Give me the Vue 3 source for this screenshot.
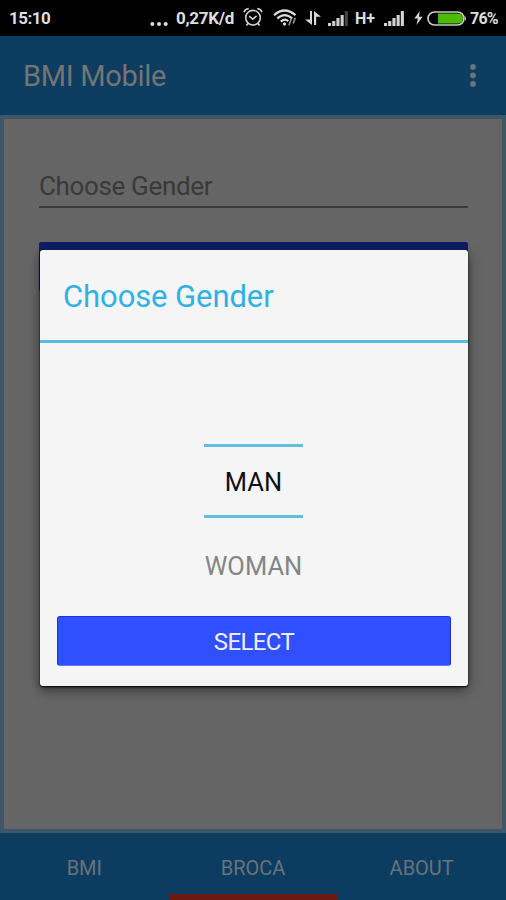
<script setup>
const tabs = [
  { label: 'BMI', active: false },
  { label: 'BROCA', active: true },
  { label: 'ABOUT', active: false },
]
const bars = [3, 5, 8, 11, 15]
</script>

<template>
  <div class="screen">
    <div class="status">
      <span class="clock">15:10</span>
      <svg class="dots" width="18" height="6" viewBox="0 0 18 6" fill="#dedede">
        <circle cx="2.3" cy="3" r="2" /><circle cx="9" cy="3" r="2" /><circle cx="15.7" cy="3" r="2" />
      </svg>
      <span class="speed">0,27K/d</span>
      <svg class="alarm" width="20" height="20" viewBox="0 0 20 20" fill="none" stroke="#cfcfcf" stroke-width="1.6">
        <circle cx="10" cy="10.7" r="7.3" />
        <path d="M6.2 9.2 9.8 12.2 13.6 8.9M1 5.2Q2 2 5.8 1.5M19 5.2Q18 2 14.2 1.5M5 16.2 3.5 18.5M15 16.2 16.5 18.5" />
      </svg>
      <svg class="wifi" width="25" height="18" viewBox="0 0 25 18" fill="none" stroke="#dadada" stroke-width="2.2">
        <path d="M1 6.2Q11.5-3.2 22.5 6.2M4.3 9.5Q11.7 2.7 19.2 9.5M7.8 12.6Q11.7 9 15.2 12.1" />
        <circle cx="11.5" cy="15" r="1.2" fill="#dadada" stroke-width="1" />
        <path d="M16 16.2 18.2 9.8M20.2 14.6 22.3 8.8" stroke="#999" stroke-width="1.6" />
      </svg>
      <svg class="arrows" width="16" height="16" viewBox="0 0 16 16" fill="#d8d8d8">
        <path d="M5 1H7V15L0 9.5H5ZM9 1 16 6.7H11.2V15H9Z" />
      </svg>
      <svg class="signal first" width="21" height="16" viewBox="0 0 21 16">
        <rect v-for="(h, i) in bars" :key="i" :x="i * 4.2" :y="16 - h" width="3.1" :height="h" :fill="i === 4 ? '#444' : '#cfcfcf'" />
      </svg>
      <span class="net">H+</span>
      <svg class="signal second" width="21" height="17" viewBox="0 0 21 17">
        <rect v-for="(h, i) in bars" :key="i" :x="i * 4.2" :y="16 - h" width="3.1" :height="h" fill="#d5d5d5" />
      </svg>
      <svg class="bolt" width="9" height="14" viewBox="0 0 9 14" fill="#d5d5d5">
        <path d="M5.8 0 .3 7.6H3.9L2.4 14 8.7 5.7H5Z" />
      </svg>
      <svg class="battery" width="40" height="15" viewBox="0 0 40 15">
        <rect x="1" y="1" width="36" height="13" rx="6.5" fill="#000" stroke="#cacaca" stroke-width="1.7" />
        <path d="M38 5Q40 7.5 38 10Z" fill="#cacaca" />
        <path d="M11 2.6H31Q36 3 36 7.5T31 12.4H11Z" fill="#4cbb05" />
      </svg>
      <span class="percent">76%</span>
    </div>
    <header class="appbar">
      <h1>BMI Mobile</h1>
      <svg width="8" height="24" viewBox="0 0 8 24" fill="#6b747b">
        <circle cx="4" cy="2.9" r="2.8" /><circle cx="4" cy="11.4" r="2.8" /><circle cx="4" cy="19.9" r="2.8" />
      </svg>
    </header>
    <main class="body">
      <div class="page">
        <div class="field"><span>Choose Gender</span></div>
        <div class="submit"></div>
      </div>
    </main>
    <nav class="tabs">
      <div v-for="tab in tabs" :key="tab.label" class="tab" :class="{ active: tab.active }">
        <span>{{ tab.label }}</span>
      </div>
    </nav>
    <section class="dialog">
      <h2><span>Choose Gender</span></h2>
      <div class="picker">
        <div class="choice selected"><span>MAN</span></div>
        <div class="choice"><span>WOMAN</span></div>
      </div>
      <button>SELECT</button>
    </section>
  </div>
</template>

<style>
body { margin: 0; }
</style>

<style scoped>
* { box-sizing: border-box; }
.screen {
  position: relative;
  display: flex;
  flex-direction: column;
  width: 506px;
  height: 900px;
  overflow: hidden;
  background: #656565;
  font-family: Roboto, sans-serif;
}
.status {
  display: flex;
  align-items: center;
  height: 36px;
  flex: none;
  background: #000;
  color: #dedede;
  font-size: 17px;
  font-weight: 700;
  white-space: nowrap;
}
.status svg { flex: none; }
.clock { width: 141px; padding-left: 9px; letter-spacing: -0.5px; }
.dots { margin: 12px 8px 0 9px; }
.speed { width: 58px; letter-spacing: -0.3px; }
.alarm { margin-left: 9px; margin-top: -2px; }
.wifi { margin-left: 10px; }
.arrows { margin-left: 7px; }
.signal.first { margin-left: 7px; }
.net { width: 20px; margin-left: 6px; font-size: 16px; }
.signal.second { margin-left: 9px; }
.bolt { margin-left: 9px; }
.battery { margin-left: 4px; }
.percent { margin-left: 3px; font-size: 16px; letter-spacing: -0.8px; }
.appbar {
  display: flex;
  align-items: center;
  justify-content: space-between;
  height: 79px;
  flex: none;
  padding: 1px 29px 0 23px;
  background: #0c3c60;
}
h1 { margin: 0; color: #747474; font-size: 29px; font-weight: 400; letter-spacing: -0.3px; }
.body { flex: 1; padding: 4px; background: #3d5668; }
.page { height: 100%; padding: 48px 34px 0 35px; background: #656565; }
.field {
  display: flex;
  align-items: center;
  height: 41px;
  padding-bottom: 1px;
  border-bottom: 2px solid #3b3b3b;
  color: #393939;
  font-size: 26px;
  letter-spacing: -0.35px;
}
.submit { height: 49px; margin-top: 34px; border-radius: 2px; background: #101d66; }
.tabs { display: flex; height: 67px; flex: none; background: #0c3c60; }
.tab {
  display: flex;
  align-items: center;
  justify-content: center;
  flex: 1;
  padding-top: 8px;
  border-bottom: 6px solid transparent;
  color: #68737b;
  font-size: 20px;
}
.tab.active { border-color: #6c1a11; }
.dialog {
  position: absolute;
  top: 250px;
  left: 40px;
  width: 428px;
  height: 436px;
  display: flex;
  flex-direction: column;
  border-radius: 3px;
  background: #f5f5f5;
  box-shadow: 0 1px 2px #000, 0 4px 12px rgba(0, 0, 0, 0.5);
}
h2 {
  display: flex;
  align-items: center;
  height: 93px;
  margin: 0;
  padding: 3px 23px 0;
  border-bottom: 3px solid #5bb9dc;
  color: #30b1df;
  font-size: 31px;
  font-weight: 400;
  letter-spacing: -0.1px;
}
.picker {
  display: flex;
  flex-direction: column;
  align-items: center;
  height: 273px;
  padding: 101px 1px 0 0;
}
.choice {
  display: flex;
  align-items: center;
  justify-content: center;
  width: 99px;
  height: 74px;
  color: #858585;
  font-size: 25.5px;
  padding-top: 22px;
}
.choice.selected {
  padding-top: 2px;
  border-top: 3px solid #60bee0;
  border-bottom: 3px solid #60bee0;
  color: #101010;
}
button {
  height: 50px;
  margin: 0 17px;
  padding: 1px 0 0;
  border: 1px solid #1832e8;
  border-bottom-color: #6375f4;
  border-radius: 3px;
  background: #3050ff;
  color: #eceffc;
  font-family: inherit;
  font-size: 24px;
  letter-spacing: -0.6px;
}
</style>
